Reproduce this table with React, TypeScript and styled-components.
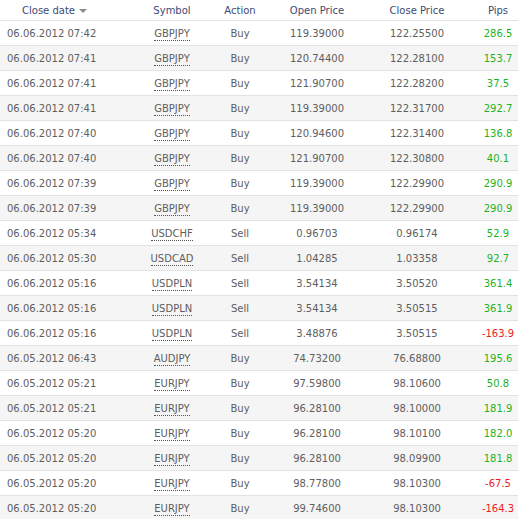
import React from "react";
import styled, { createGlobalStyle } from "styled-components";

const Global = createGlobalStyle`
  html, body { margin: 0; padding: 0; background: #fff; overflow: hidden; }
  body { font-family: Tahoma, "DejaVu Sans", sans-serif; }
`;

type Trade = [string, string, string, string, string, string];

const trades: Trade[] = [
  ["06.06.2012 07:42", "GBPJPY", "Buy", "119.39000", "122.25500", "286.5"],
  ["06.06.2012 07:41", "GBPJPY", "Buy", "120.74400", "122.28100", "153.7"],
  ["06.06.2012 07:41", "GBPJPY", "Buy", "121.90700", "122.28200", "37.5"],
  ["06.06.2012 07:41", "GBPJPY", "Buy", "119.39000", "122.31700", "292.7"],
  ["06.06.2012 07:40", "GBPJPY", "Buy", "120.94600", "122.31400", "136.8"],
  ["06.06.2012 07:40", "GBPJPY", "Buy", "121.90700", "122.30800", "40.1"],
  ["06.06.2012 07:39", "GBPJPY", "Buy", "119.39000", "122.29900", "290.9"],
  ["06.06.2012 07:39", "GBPJPY", "Buy", "119.39000", "122.29900", "290.9"],
  ["06.06.2012 05:34", "USDCHF", "Sell", "0.96703", "0.96174", "52.9"],
  ["06.06.2012 05:30", "USDCAD", "Sell", "1.04285", "1.03358", "92.7"],
  ["06.06.2012 05:16", "USDPLN", "Sell", "3.54134", "3.50520", "361.4"],
  ["06.06.2012 05:16", "USDPLN", "Sell", "3.54134", "3.50515", "361.9"],
  ["06.06.2012 05:16", "USDPLN", "Sell", "3.48876", "3.50515", "-163.9"],
  ["06.05.2012 06:43", "AUDJPY", "Buy", "74.73200", "76.68800", "195.6"],
  ["06.05.2012 05:21", "EURJPY", "Buy", "97.59800", "98.10600", "50.8"],
  ["06.05.2012 05:21", "EURJPY", "Buy", "96.28100", "98.10000", "181.9"],
  ["06.05.2012 05:20", "EURJPY", "Buy", "96.28100", "98.10100", "182.0"],
  ["06.05.2012 05:20", "EURJPY", "Buy", "96.28100", "98.09900", "181.8"],
  ["06.05.2012 05:20", "EURJPY", "Buy", "98.77800", "98.10300", "-67.5"],
  ["06.05.2012 05:20", "EURJPY", "Buy", "99.74600", "98.10300", "-164.3"],
];

const COLS = "140px 64px 72px 82px 118px 44px";

const Table = styled.div`
  width: 520px;
  font-family: "DejaVu Sans", sans-serif;
  font-size: 10px;
`;

const HeaderRow = styled.div`
  display: grid;
  grid-template-columns: ${COLS};
  height: 20px;
  border-bottom: 1px solid #e2e2e2;
  color: #3d4a73;
  align-items: center;
`;

const Row = styled.div<{ $alt: boolean }>`
  display: grid;
  grid-template-columns: ${COLS};
  height: 24px;
  border-bottom: 1px solid #e2e2e2;
  background: ${(p) => (p.$alt ? "#f5f5f5" : "#ffffff")};
  color: #5e5e5e;
  align-items: center;
`;

const HeadCell = styled.div<{ $left?: boolean }>`
  padding-left: ${(p) => (p.$left ? "22px" : "0")};
  white-space: nowrap;
  display: flex;
  align-items: center;
  justify-content: ${(p) => (p.$left ? "flex-start" : "center")};
`;

const Cell = styled.div<{ $left?: boolean }>`
  text-align: ${(p) => (p.$left ? "left" : "center")};
  padding-left: ${(p) => (p.$left ? "7px" : "0")};
  white-space: nowrap;
`;

const Symbol = styled.span`
  padding-bottom: 1px;
  border-bottom: 1px dotted #555;
`;

const Pips = styled.div<{ $neg: boolean }>`
  text-align: center;
  white-space: nowrap;
  color: ${(p) => (p.$neg ? "#ee1c25" : "#1db31d")};
`;

const SortArrow = styled.span`
  display: inline-block;
  width: 0;
  height: 0;
  margin-left: 4px;
  margin-top: 2px;
  border-left: 4px solid transparent;
  border-right: 4px solid transparent;
  border-top: 4px solid #8a8a8a;
`;

export default function App() {
  return (
    <>
      <Global />
      <Table>
        <HeaderRow>
          <HeadCell $left>
            Close date
            <SortArrow />
          </HeadCell>
          <HeadCell>Symbol</HeadCell>
          <HeadCell>Action</HeadCell>
          <HeadCell>Open Price</HeadCell>
          <HeadCell>Close Price</HeadCell>
          <HeadCell>Pips</HeadCell>
        </HeaderRow>
        {trades.map((t, i) => (
          <Row key={i} $alt={i % 2 === 1}>
            <Cell $left>{t[0]}</Cell>
            <Cell>
              <Symbol>{t[1]}</Symbol>
            </Cell>
            <Cell>{t[2]}</Cell>
            <Cell>{t[3]}</Cell>
            <Cell>{t[4]}</Cell>
            <Pips $neg={t[5].startsWith("-")}>{t[5]}</Pips>
          </Row>
        ))}
      </Table>
    </>
  );
}
